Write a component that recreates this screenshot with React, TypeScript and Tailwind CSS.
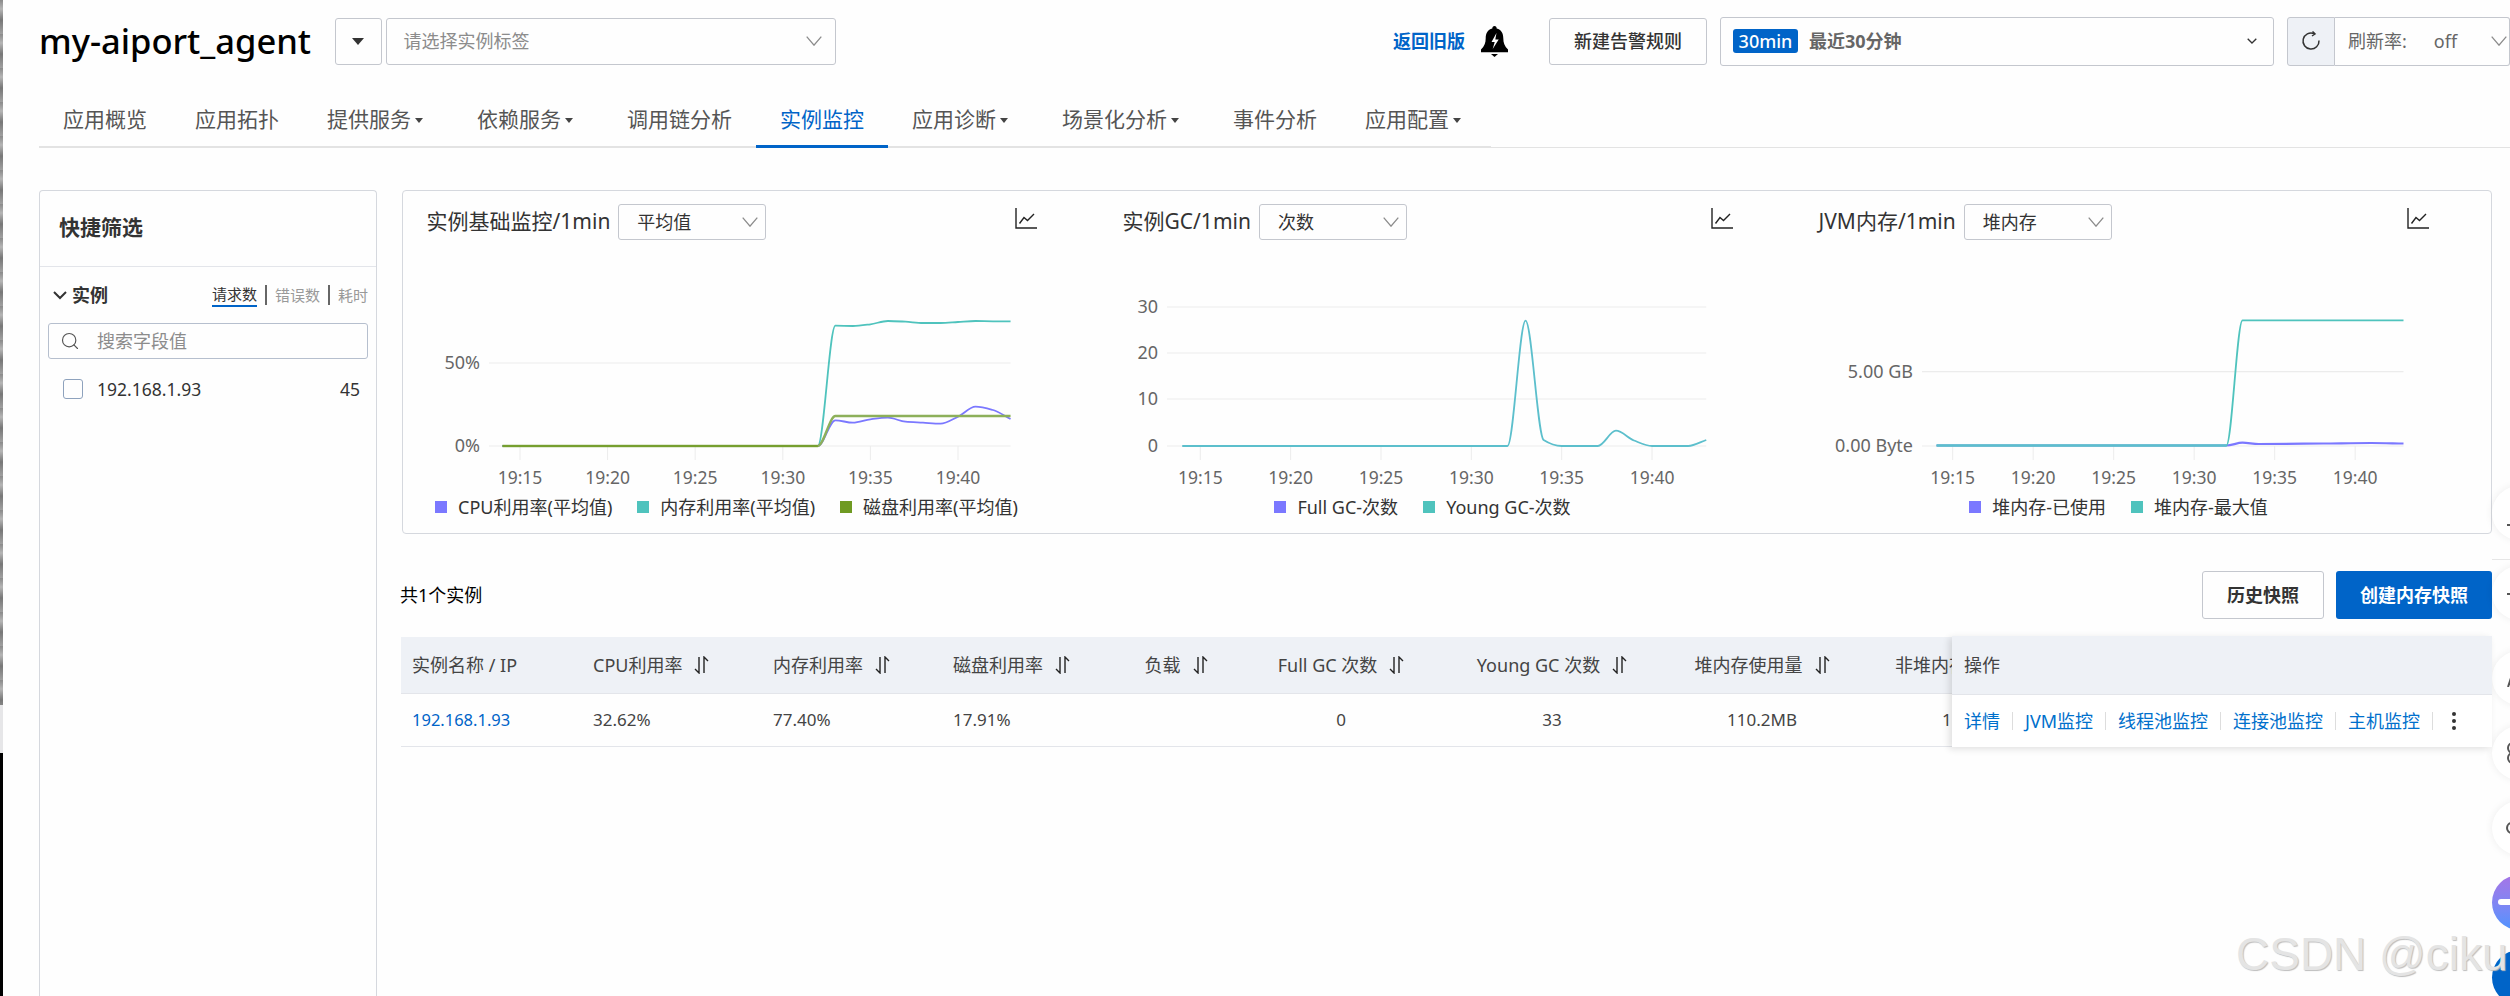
import React from 'react';
import { Search } from 'lucide-react';

type Pt = [number, number];

// monotone curve through the points, so spikes don't overshoot
const smooth = (pts: Pt[]) => {
  const d: number[] = [];
  for (let i = 0; i < pts.length - 1; i++) d.push((pts[i + 1][1] - pts[i][1]) / (pts[i + 1][0] - pts[i][0]));
  const m = pts.map((_, i) => {
    if (i === 0) return d[0];
    if (i === pts.length - 1) return d[i - 1];
    return d[i - 1] * d[i] <= 0 ? 0 : (2 * d[i - 1] * d[i]) / (d[i - 1] + d[i]);
  });
  let path = `M${pts[0][0]} ${pts[0][1]}`;
  for (let i = 0; i < pts.length - 1; i++) {
    const h = (pts[i + 1][0] - pts[i][0]) / 3;
    path += `C${pts[i][0] + h} ${pts[i][1] + m[i] * h} ${pts[i + 1][0] - h} ${pts[i + 1][1] - m[i + 1] * h} ${pts[i + 1][0]} ${pts[i + 1][1]}`;
  }
  return path;
};

interface Series {
  color: string;
  width?: number;
  points: [number, number][]; // minute after 19:00, y in page pixels
}

interface ChartProps {
  colX: number;
  title: string;
  option: string;
  tick0: number; // x of 19:15
  perMin: number;
  gridLeft: number;
  grid: { y: number; label: string }[];
  labelRight: number;
  series: Series[];
  legend: { color: string; label: string }[];
}

const Chevron = () => (
  <svg width="16" height="10" viewBox="0 0 16 10" fill="none" stroke="#8c8c8c" strokeWidth="1.3" className="shrink-0">
    <path d="M0.7 0.7L8 9.2L15.3 0.7" />
  </svg>
);

const Caret = () => <span className="ml-1 inline-block h-0 w-0 border-x-4 border-t-[5px] border-x-transparent border-t-[#444] align-middle" />;

const LineIcon = () => (
  <svg width="22" height="21" viewBox="0 0 22 21" fill="none" stroke="#222" strokeWidth="1.4" className="-mt-2 ml-auto mr-[62px] shrink-0">
    <path d="M1 0V20H22" />
    <path d="M4.5 15.5L9 9.5L12.5 12.5L19 6" />
  </svg>
);

const SortIcon = () => (
  <svg width="15" height="18" viewBox="0 0 15 18" fill="none" stroke="#222" strokeWidth="1.4" className="ml-[12px] shrink-0">
    <path d="M5 1V17L1 13" />
    <path d="M10 17V1L14 5" />
  </svg>
);

const Chart: React.FC<ChartProps> = ({ colX, title, option, tick0, perMin, gridLeft, grid, labelRight, series, legend }) => {
  const xAt = (min: number) => tick0 + (min - 15) * perMin;
  const right = xAt(43);
  const bottom = 446;
  return (
    <div>
      <div className="flex h-9 items-center pl-[23.5px]">
        <span className="text-[21px] text-[#333]">{title}</span>
        <div className="ml-2 flex h-9 w-[148px] items-center justify-between rounded-[3px] border border-[#c4c7ce] pl-[18px] pr-[7px] text-[18px] text-[#333]">
          {option}
          <Chevron />
        </div>
        <LineIcon />
      </div>
      <svg width="696" height="250" viewBox={`${colX} 240 696 250`} className="block">
        {grid.map(g => (
          <g key={g.label}>
            <line x1={gridLeft} x2={right} y1={g.y} y2={g.y} stroke="#ececec" strokeWidth="1.2" />
            <text x={labelRight} y={g.y + 6} textAnchor="end" fontSize="18" fill="#666">{g.label}</text>
          </g>
        ))}
        {[15, 20, 25, 30, 35, 40].map(m => (
          <g key={m}>
            <line x1={xAt(m)} x2={xAt(m)} y1={bottom} y2={460} stroke="#ececec" />
            <text x={xAt(m)} y={484} textAnchor="middle" fontSize="17.5" fill="#666">19:{m}</text>
          </g>
        ))}
        {series.map((s, i) => (
          <path key={i} d={smooth(s.points.map(([m, y]) => [xAt(m), y] as Pt))} fill="none" stroke={s.color} strokeWidth={s.width || 1.8} />
        ))}
      </svg>
      <div className="flex h-[34px] items-center justify-center gap-[25px] pr-[49px]">
        {legend.map(l => (
          <div key={l.label} className="flex items-center gap-[11px] text-[18px] text-[#333]">
            <span className="h-3 w-3" style={{ backgroundColor: l.color }} />
            {l.label}
          </div>
        ))}
      </div>
    </div>
  );
};

const purple = '#7b78ff';
const teal = '#4fc3bd';
const olive = '#6f9a22';

const flat = (y: number): [number, number][] => [[14, y], [32, y]];

const charts: ChartProps[] = [
  {
    colX: 403,
    title: '实例基础监控/1min',
    option: '平均值',
    tick0: 520,
    perMin: 17.52,
    gridLeft: 489,
    labelRight: 480,
    grid: [{ y: 363, label: '50%' }, { y: 446, label: '0%' }],
    series: [
      { color: teal, points: [...flat(446), [33, 325.7], [34, 326], [35, 324.3], [36, 321], [37, 321.7], [38, 323], [39, 323], [40, 322], [41, 321], [42, 321.3], [43, 321.3]] },
      { color: purple, points: [...flat(446), [33, 420.3], [34, 422.7], [35, 419.3], [36, 417.7], [37, 421.7], [38, 422.7], [39, 423.7], [40, 416.7], [41, 406.7], [42, 410], [43, 419]] },
      { color: '#8db05a', width: 2.4, points: [...flat(446), [33, 416], [43, 416]] },
      { color: '#6f9a22', width: 1.6, points: flat(446) },
    ],
    legend: [
      { color: purple, label: 'CPU利用率(平均值)' },
      { color: teal, label: '内存利用率(平均值)' },
      { color: olive, label: '磁盘利用率(平均值)' },
    ],
  },
  {
    colX: 1099,
    title: '实例GC/1min',
    option: '次数',
    tick0: 1200.3,
    perMin: 18.07,
    gridLeft: 1167,
    labelRight: 1158,
    grid: [{ y: 307, label: '30' }, { y: 353, label: '20' }, { y: 399, label: '10' }, { y: 446, label: '0' }],
    series: [
      { color: '#5cbfcc', width: 1.8, points: [...flat(446), [33, 320.7], [34, 440], [35, 446], [37, 446], [38, 430.7], [39, 440.5], [40, 446], [42, 446], [43, 440]] },
    ],
    legend: [
      { color: purple, label: 'Full GC-次数' },
      { color: teal, label: 'Young GC-次数' },
    ],
  },
  {
    colX: 1795,
    title: 'JVM内存/1min',
    option: '堆内存',
    tick0: 1952.7,
    perMin: 16.1,
    gridLeft: 1922,
    labelRight: 1913,
    grid: [{ y: 371.7, label: '5.00 GB' }, { y: 446, label: '0.00 Byte' }],
    series: [
      { color: purple, width: 2.2, points: [...flat(445.5), [33, 442.7], [34, 444], [38, 443.5], [41, 443], [43, 443.5]] },
      { color: teal, points: [...flat(445.5), [33, 320.3], [43, 320.3]] },
      { color: '#5cbfcc', width: 2, points: flat(445.5) },
    ],
    legend: [
      { color: purple, label: '堆内存-已使用' },
      { color: teal, label: '堆内存-最大值' },
    ],
  },
];

const navItems = [
  { label: '应用概览' },
  { label: '应用拓扑' },
  { label: '提供服务', caret: true },
  { label: '依赖服务', caret: true },
  { label: '调用链分析' },
  { label: '实例监控', active: true },
  { label: '应用诊断', caret: true },
  { label: '场景化分析', caret: true },
  { label: '事件分析' },
  { label: '应用配置', caret: true },
];

const columns = [
  { title: '实例名称 / IP', value: '192.168.1.93', head: 'w-[180px] pl-[11px]', cell: 'w-[180px] pl-[11px] text-[16.5px] text-[#0064c8]', sort: false },
  { title: 'CPU利用率', value: '32.62%', head: 'w-[180px] pl-3', cell: 'w-[180px] pl-3 text-[17px]', sort: true },
  { title: '内存利用率', value: '77.40%', head: 'w-[180px] pl-3', cell: 'w-[180px] pl-3 text-[17px]', sort: true },
  { title: '磁盘利用率', value: '17.91%', head: 'w-[180px] pl-3', cell: 'w-[180px] pl-3 text-[17px]', sort: true },
  { title: '负载', value: '', head: 'w-[110px] justify-center', cell: 'w-[110px] justify-center text-[17px]', sort: true },
  { title: 'Full GC 次数', value: '0', head: 'w-[220px] justify-center', cell: 'w-[220px] justify-center text-[17px]', sort: true },
  { title: 'Young GC 次数', value: '33', head: 'w-[202px] justify-center', cell: 'w-[202px] justify-center text-[17px]', sort: true },
  { title: '堆内存使用量', value: '110.2MB', head: 'w-[218px] justify-center', cell: 'w-[218px] justify-center text-[17px]', sort: true },
  { title: '非堆内存使用量', value: '', head: 'w-[200px] pl-6', cell: 'w-[200px] pl-[71px] text-[17px]', sort: true },
];

const floats = [
  { cls: 'top-[486px]', mark: <span className="absolute left-[15px] top-[38px] h-[2px] w-[6px] bg-[#555]" /> },
  { cls: 'top-[566px]', mark: <span className="absolute left-[15px] top-[27px] h-[2px] w-[6px] bg-[#555]" /> },
  {
    cls: 'top-[651px]',
    mark: (
      <svg width="6" height="16" viewBox="0 0 6 16" className="absolute left-[15px] top-[20px]" fill="none" stroke="#555" strokeWidth="2">
        <path d="M1 16L6 1" />
      </svg>
    ),
  },
  {
    cls: 'top-[726px]',
    mark: (
      <svg width="6" height="22" viewBox="0 0 6 22" className="absolute left-[14px] top-[16px]" fill="none" stroke="#555" strokeWidth="2">
        <circle cx="7" cy="6" r="5" />
        <circle cx="7" cy="16" r="5" />
      </svg>
    ),
  },
  {
    cls: 'top-[801px]',
    mark: (
      <svg width="6" height="12" viewBox="0 0 6 12" className="absolute left-[14px] top-[21px]" fill="none" stroke="#555" strokeWidth="2">
        <circle cx="6" cy="6" r="5" />
      </svg>
    ),
  },
];

const App: React.FC = () => {
  return (
    <div className="relative flex h-[996px] w-[2510px] overflow-hidden bg-[#fefefe] text-[18px] text-[#333] [font-family:'Noto_Sans','Noto_Sans_CJK_SC',sans-serif]">
      {/* edge of the window behind the captured page */}
      <div className="flex w-[3px] shrink-0 flex-col">
        <div className="h-[705px] bg-[repeating-linear-gradient(180deg,#8a8a8a_0px,#b5b5b5_9px,#777777_20px,#a0a0a0_34px)]" />
        <div className="h-12 bg-[#e6e6e8]" />
        <div className="flex-1 bg-black" />
      </div>

      <div className="min-w-0 flex-1 pl-9">
        {/* header */}
        <div className="mt-4 flex h-[49px] items-center pt-px">
          <h1 className="w-[295.5px] shrink-0 text-[34.5px] font-medium leading-none text-black">my-aiport_agent</h1>
          <div className="flex h-[47px] w-[47px] shrink-0 items-center justify-center rounded-[3px] border border-[#c4c7ce]">
            <span className="h-0 w-0 border-x-[6px] border-t-[7px] border-x-transparent border-t-[#333]" />
          </div>
          <div className="ml-1 flex h-[47px] w-[450px] shrink-0 items-center justify-between rounded-[3px] border border-[#c4c7ce] pl-[17px] pr-[13px] text-[#8c8c8c]">
            请选择实例标签
            <Chevron />
          </div>
          <div className="ml-auto flex items-center">
            <span className="font-bold text-[#0064c8]">返回旧版</span>
            <svg width="27" height="31" viewBox="0 0 27 31" className="ml-[16px]">
              <path d="M13.5 0c1.4 0 2.2 1 2.2 2.6 4.6 1.2 6.6 5 6.6 9.6 0 4.4 1.2 8 4.7 11.4v2.6H0v-2.6c3.5-3.4 4.7-7 4.7-11.4 0-4.6 2-8.4 6.6-9.6C11.3 1 12.1 0 13.5 0z" fill="#000" />
              <path d="M10 28h7l-3.5 3z" fill="#000" />
              <path d="M15.5 7l-5 9h3.2l-2 7 6-9.6h-3.4z" fill="#fff" />
            </svg>
            <div className="ml-[41px] flex h-[47px] w-[158px] items-center justify-center rounded-[3px] border border-[#c4c7ce] font-medium text-[#333]">新建告警规则</div>
            <div className="ml-[13px] flex h-[49px] w-[554px] items-center rounded-[3px] border border-[#c4c7ce] pl-3 pr-4">
              <span className="flex h-6 w-[65px] items-center justify-center rounded-[3px] bg-[#0064c8] font-medium text-white">30min</span>
              <span className="ml-[11px] font-bold text-[#666]">最近30分钟</span>
              <svg width="10" height="6" viewBox="0 0 10 6" fill="none" stroke="#333" strokeWidth="1.3" className="ml-auto">
                <path d="M0.7 0.7L5 5L9.3 0.7" />
              </svg>
            </div>
            <div className="ml-[13px] flex h-[49px] w-12 items-center justify-center rounded-l-[3px] border border-[#c4c7ce] bg-[#eef1f6]">
              <svg width="20" height="20" viewBox="0 0 20 20" fill="none" stroke="#333" strokeWidth="1.5">
                <path d="M13 2.6A8 8 0 1 0 18 9.5" />
                <path d="M11.5 0.5L14 3L11 5" />
              </svg>
            </div>
            <div className="flex h-[49px] w-[175px] items-center rounded-r-[3px] border border-l-0 border-[#c4c7ce] pl-[13px] pr-[2px] text-[#666]">
              刷新率:
              <span className="ml-[27px]">off</span>
              <span className="ml-auto"><Chevron /></span>
            </div>
          </div>
        </div>

        {/* tabs */}
        <div className="mt-[30px] flex h-[53px] border-b border-[#e3e3e3]">
          <div className="-mb-px flex border-b-2 border-[#e3e3e3]">
            {navItems.map(item => (
              <div
                key={item.label}
                className={`-mb-0.5 flex items-center border-b-[3px] pl-6 text-[21px] ${item.caret ? 'pr-[30px]' : 'pr-6'} ${item.active ? 'border-[#0064c8] text-[#0064c8]' : 'border-transparent text-[#555]'}`}
              >
                {item.label}
                {item.caret && <Caret />}
              </div>
            ))}
          </div>
        </div>

        {/* body */}
        <div className="mt-[42px] flex gap-[25px]">
          <aside className="h-[806px] w-[338px] shrink-0 rounded-t-[4px] border border-b-0 border-[#d5d8de]">
            <div className="flex h-[76px] items-center border-b border-[#e3e5ea] pb-0.5 pl-[19px] text-[21px] font-bold text-[#333]">快捷筛选</div>
            <div className="flex h-[56px] items-center pl-[13px] pr-2">
              <svg width="14" height="9" viewBox="0 0 14 9" fill="none" stroke="#333" strokeWidth="2">
                <path d="M1 1L7 7L13 1" />
              </svg>
              <span className="ml-[5px] font-bold text-[#333]">实例</span>
              <div className="ml-auto flex items-center text-[15px] text-[#999]">
                <span className="border-b-2 border-[#0064c8] leading-[21px] text-[#333]">请求数</span>
                <span className="mx-[8px] h-5 w-[2px] bg-[#666]" />
                <span>错误数</span>
                <span className="mx-[8px] h-5 w-[2px] bg-[#666]" />
                <span>耗时</span>
              </div>
            </div>
            <div className="ml-2 flex h-9 w-[320px] items-center rounded-[3px] border border-[#b6bfce] pl-[11px] text-[#8c8c8c]">
              <Search size={20} strokeWidth={1.4} color="#555" />
              <span className="ml-[17px]">搜索字段值</span>
            </div>
            <div className="mt-5 flex h-5 items-center pl-[23px] pr-[16px] text-[17.5px] text-[#333]">
              <span className="h-5 w-5 rounded-[3px] border border-[#8ea2bd]" />
              <span className="ml-[14px]">192.168.1.93</span>
              <span className="ml-auto">45</span>
            </div>
          </aside>

          <main className="w-[2090px] shrink-0">
            <div className="h-[344px] rounded-[4px] border border-[#d5d8de] pt-[13px]">
              <div className="grid grid-cols-3">
                {charts.map(c => (
                  <Chart key={c.title} {...c} />
                ))}
              </div>
            </div>

            <div className="mt-[37px] flex h-12 items-center justify-between">
              <span className="-ml-0.5 text-black">共1个实例</span>
              <div className="flex gap-3">
                <div className="flex h-12 w-[122px] items-center justify-center rounded-[3px] border border-[#c4c7ce] font-bold text-[#333]">历史快照</div>
                <div className="flex h-12 w-[156px] items-center justify-center rounded-[3px] bg-[#0064c8] font-bold text-white">创建内存快照</div>
              </div>
            </div>

            <div className="-ml-px mt-[17px] flex items-start">
              <div className="mt-px min-w-0 flex-1 overflow-hidden">
                <div className="flex h-[57px] w-max border-b border-[#e3e5ea] bg-[#eef1f6] text-[#444]">
                  {columns.map(col => (
                    <div key={col.title} className={`flex shrink-0 items-center whitespace-nowrap ${col.head}`}>
                      {col.title}
                      {col.sort && <SortIcon />}
                    </div>
                  ))}
                </div>
                <div className="flex h-[53px] w-max border-b border-[#e3e5ea] text-[#444]">
                  {columns.map(col => (
                    <div key={col.title} className={`flex shrink-0 items-center whitespace-nowrap ${col.cell}`}>
                      {col.title === '非堆内存使用量' ? '1.' : col.value}
                    </div>
                  ))}
                </div>
              </div>
              <div className="relative z-10 w-[540px] shrink-0 shadow-[-3px_2px_7px_rgba(0,0,0,0.12)]">
                <div className="flex h-[59px] items-center border-b border-[#e3e5ea] bg-[#eef1f6] pl-3 text-[#444]">操作</div>
                <div className="flex h-[52px] items-center bg-white pl-3 text-[#0070cc]">
                  <span>详情</span>
                  <span className="mx-3 h-[18px] w-px bg-[#ddd]" />
                  <span>JVM监控</span>
                  <span className="mx-3 h-[18px] w-px bg-[#ddd]" />
                  <span>线程池监控</span>
                  <span className="mx-3 h-[18px] w-px bg-[#ddd]" />
                  <span>连接池监控</span>
                  <span className="mx-3 h-[18px] w-px bg-[#ddd]" />
                  <span>主机监控</span>
                  <span className="mx-3 h-[18px] w-px bg-[#ddd]" />
                  <span className="ml-[7px] flex flex-col gap-[3px]">
                    <span className="h-1 w-1 rounded-full bg-[#333]" />
                    <span className="h-1 w-1 rounded-full bg-[#333]" />
                    <span className="h-1 w-1 rounded-full bg-[#333]" />
                  </span>
                </div>
              </div>
            </div>
          </main>
        </div>
      </div>

      {/* floating helper buttons, cut off by the window edge */}
      <span className="absolute left-[2492px] top-[559px] h-px w-[18px] bg-[#e6e6e6]" />
      {floats.map(f => (
        <div key={f.cls} className={`absolute left-[2492px] h-[54px] w-[54px] rounded-full bg-white shadow-[0_0_8px_rgba(0,0,0,0.07)] ${f.cls}`}>
          {f.mark}
        </div>
      ))}
      <div className="absolute left-[2492px] top-[875px] h-[55px] w-[55px] rounded-full bg-linear-to-b from-[#a574e6] to-[#4b93ff]">
        <span className="absolute left-[6px] top-[24px] h-[6px] w-[14px] rounded-full bg-white" />
      </div>
      <div className="absolute left-[2492px] top-[950px] h-[55px] w-[55px] rounded-full bg-[#0064c8]" />

      {/* watermark on the screenshot */}
      <span className="pointer-events-none absolute left-[2236px] top-[926px] whitespace-nowrap text-[46px] leading-[56px] text-[#e4e4e4] [font-family:'Liberation_Sans',sans-serif] [text-shadow:1px_1px_1px_#bdbdbd]">CSDN @ciku</span>
    </div>
  );
};

export default App;
